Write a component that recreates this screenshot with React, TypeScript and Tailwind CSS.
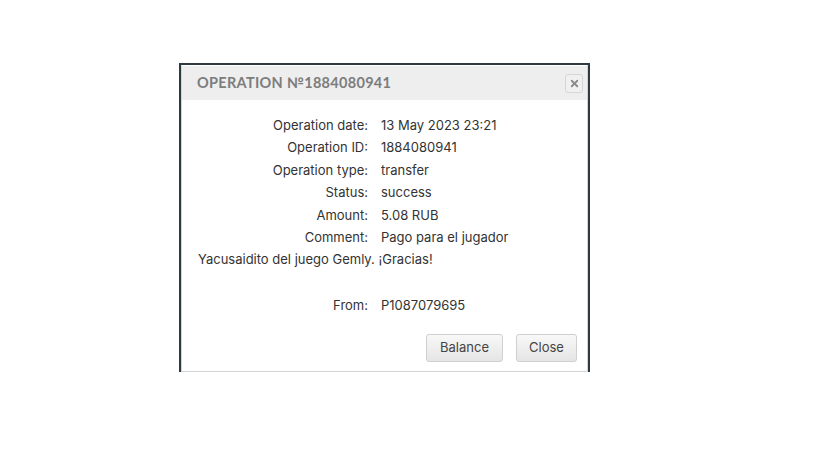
import { X } from "lucide-react"

const rows: [string, string][] = [
  ["Operation date:", "13 May 2023 23:21"],
  ["Operation ID:", "1884080941"],
  ["Operation type:", "transfer"],
  ["Status:", "success"],
  ["Amount:", "5.08 RUB"],
]

const Row = ({ label, value }: { label: string; value: string }) => (
  <div className="flex">
    <span className="w-[170px] shrink-0 text-right">{label}</span>
    <span className="pl-[13px]">{value}</span>
  </div>
)

export default function App() {
  return (
    <div className="h-[460px] w-[819px] bg-white pl-[179px] pt-[63px]">
      <div className="w-[411px] border-x-2 border-t-2 border-[#2d3a42] border-b-0 bg-white">
        <div className="border border-[#d4d4d4] border-t-white">
          <div className="flex items-center justify-between bg-[#eeeeee] pl-[15px] pr-[4px] h-[34px]">
            <h2 className="font-['Lato',sans-serif] text-[14.5px] font-bold uppercase tracking-[0.3px] text-[#7d7d7d]">
              Operation №1884080941
            </h2>
            <button className="flex h-[19px] w-[18px] items-center justify-center rounded-[3px] border border-[#d6d6d6] bg-[#f0f0f0]">
              <X size={11} strokeWidth={4} className="text-[#8a8a8a]" />
            </button>
          </div>
          <div className="pl-[16px] pr-[10px] pt-[14px] pb-[9px] font-['Inter',sans-serif] text-[13px] leading-[22.4px] text-[#333]">
            {rows.map(([l, v]) => (
              <Row key={l} label={l} value={v} />
            ))}
            <Row label="Comment:" value="Pago para el jugador" />
            <div>Yacusaidito del juego Gemly. ¡Gracias!</div>
            <div className="h-[23.4px]" />
            <Row label="From:" value="P1087079695" />
            <div className="mt-[17px] flex justify-end gap-[13px]">
              <button className="h-[28px] w-[77px] rounded-[3px] border border-[#cfcfcf] bg-gradient-to-b from-[#f8f8f8] to-[#e5e5e5] text-[13px] text-[#444]">
                Balance
              </button>
              <button className="h-[28px] w-[61px] rounded-[3px] border border-[#cfcfcf] bg-gradient-to-b from-[#f8f8f8] to-[#e5e5e5] text-[13px] text-[#444]">
                Close
              </button>
            </div>
          </div>
        </div>
      </div>
    </div>
  )
}
